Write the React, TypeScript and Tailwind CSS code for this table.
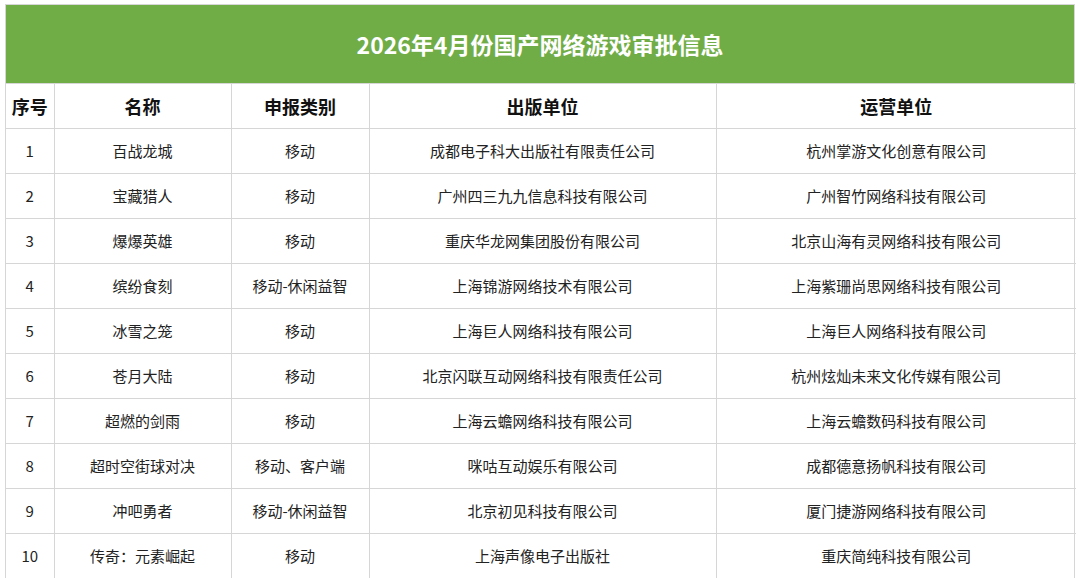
import React from 'react';

const rows = [
  ['1', '百战龙城', '移动', '成都电子科大出版社有限责任公司', '杭州掌游文化创意有限公司'],
  ['2', '宝藏猎人', '移动', '广州四三九九信息科技有限公司', '广州智竹网络科技有限公司'],
  ['3', '爆爆英雄', '移动', '重庆华龙网集团股份有限公司', '北京山海有灵网络科技有限公司'],
  ['4', '缤纷食刻', '移动-休闲益智', '上海锦游网络技术有限公司', '上海紫珊尚思网络科技有限公司'],
  ['5', '冰雪之笼', '移动', '上海巨人网络科技有限公司', '上海巨人网络科技有限公司'],
  ['6', '苍月大陆', '移动', '北京闪联互动网络科技有限责任公司', '杭州炫灿未来文化传媒有限公司'],
  ['7', '超燃的剑雨', '移动', '上海云蟾网络科技有限公司', '上海云蟾数码科技有限公司'],
  ['8', '超时空街球对决', '移动、客户端', '咪咕互动娱乐有限公司', '成都德意扬帆科技有限公司'],
  ['9', '冲吧勇者', '移动-休闲益智', '北京初见科技有限公司', '厦门捷游网络科技有限公司'],
  ['10', '传奇：元素崛起', '移动', '上海声像电子出版社', '重庆简纯科技有限公司'],
];

const headers = ['序号', '名称', '申报类别', '出版单位', '运营单位'];
const widths = ['w-[48px]', 'w-[177px]', 'w-[138px]', 'w-[347px]', 'w-[360px]'];

export default function App() {
  return (
    <div
      className="w-[1080px] h-[578px] bg-white overflow-hidden pt-[4px] pl-[5px]"
      style={{ fontFamily: '"Noto Sans CJK SC", "Noto Sans", sans-serif' }}
    >
      <div className="w-[1070px] border border-[#d6d6d6]">
        <div className="h-[78px] bg-[#70ad47] flex items-center justify-center text-white font-bold text-[23px]">
          2026年4月份国产网络游戏审批信息
        </div>
        <table className="w-full border-collapse table-fixed">
          <colgroup>
            {widths.map((w, i) => (
              <col key={i} className={w} />
            ))}
          </colgroup>
          <thead>
            <tr className="h-[45px]">
              {headers.map((h, i) => (
                <th
                  key={h}
                  className={`border-t border-[#d6d6d6] text-[18px] font-bold text-[#111] text-center p-0 ${i > 0 ? 'border-l' : ''}`}
                >
                  {h}
                </th>
              ))}
            </tr>
          </thead>
          <tbody>
            {rows.map((r) => (
              <tr key={r[0]} className="h-[45px]">
                {r.map((c, i) => (
                  <td
                    key={i}
                    className={`border-t border-[#d6d6d6] text-[15px] text-[#222] text-center p-0 ${i > 0 ? 'border-l' : ''}`}
                  >
                    {c}
                  </td>
                ))}
              </tr>
            ))}
          </tbody>
        </table>
      </div>
    </div>
  );
}
